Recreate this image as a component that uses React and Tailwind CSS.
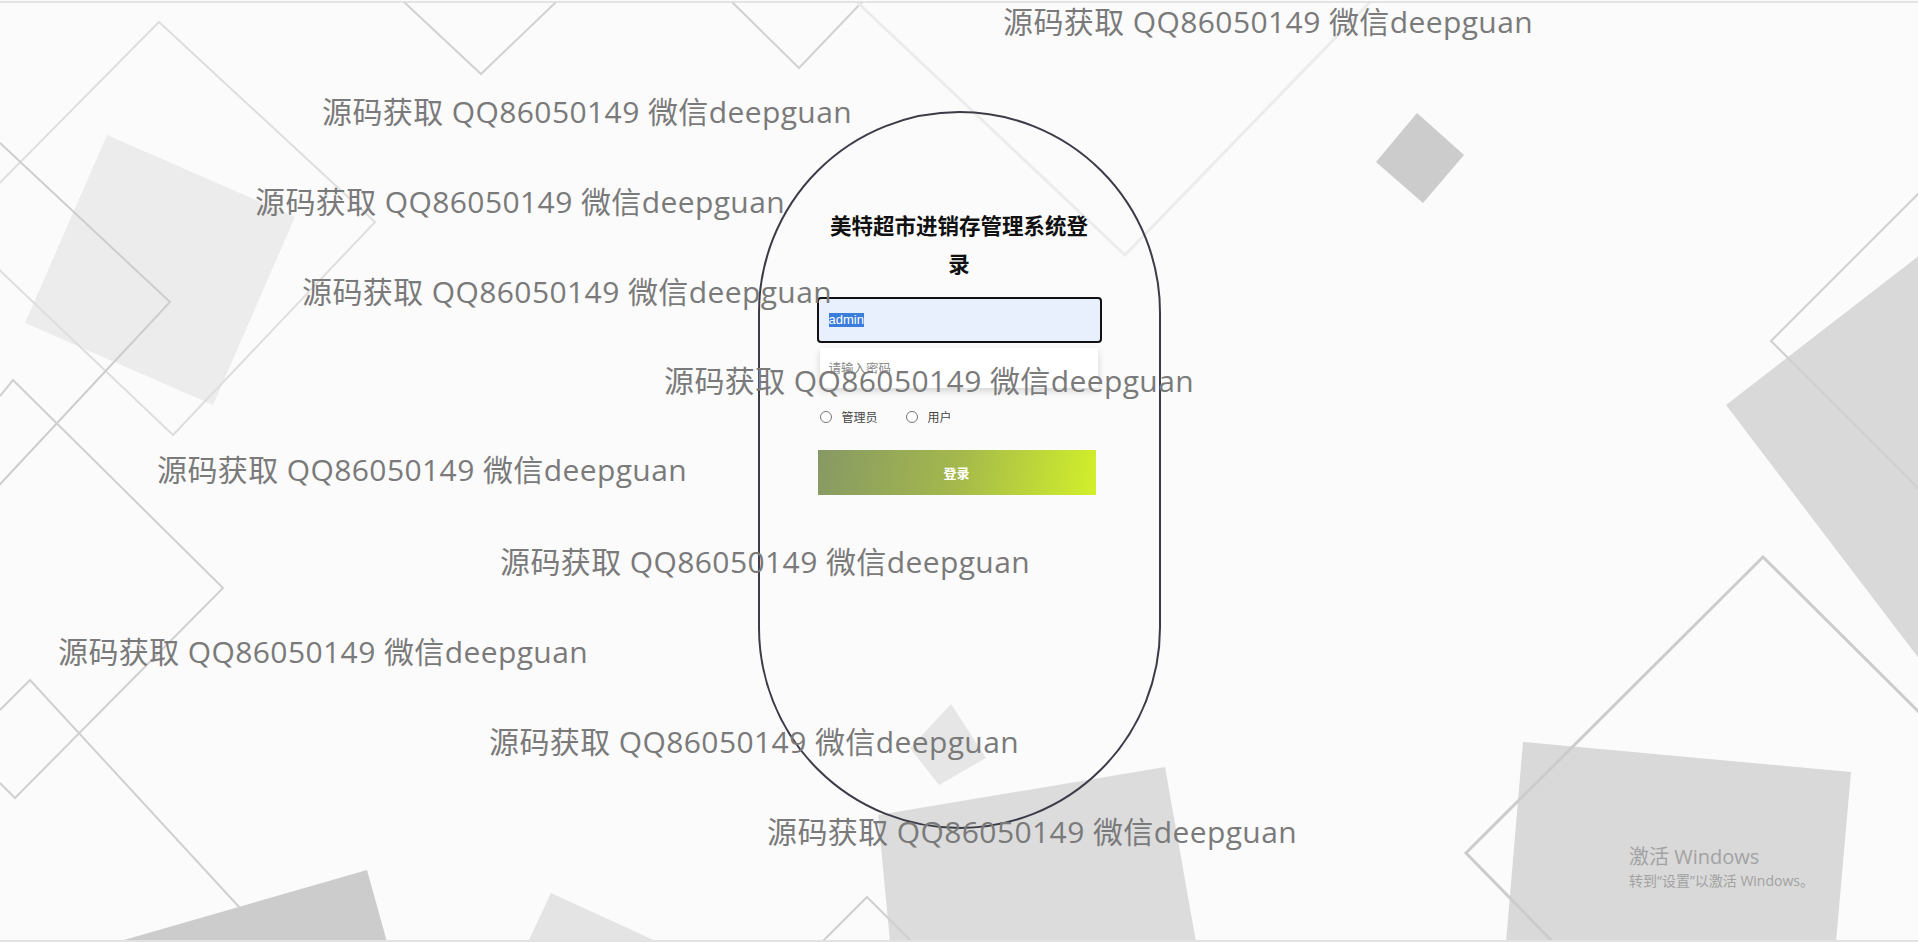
import React from 'react';

// watermark rows laid over the whole page
const WATERMARKS = [
  'left-[1003px] top-[2px]',
  'left-[322px] top-[92px]',
  'left-[255px] top-[182px]',
  'left-[302px] top-[272px]',
  'left-[664px] top-[361px]',
  'left-[157px] top-[450px]',
  'left-[500px] top-[542px]',
  'left-[58px] top-[632px]',
  'left-[489px] top-[722px]',
  'left-[767px] top-[812px]',
];

const Backdrop = () => (
  <svg className="absolute inset-0 h-full w-full" viewBox="0 0 1918 942" preserveAspectRatio="none">
    {/* filled shapes */}
    <polygon points="107,135 295,217 213,405 25,323" fill="#ececec" />
    <polygon points="117,942 367,870 387,942" fill="#cccccc" />
    <polygon points="528,942 551,893 658,942" fill="#e4e4e4" />
    <polygon points="951,704 986,758 939,785 910,748" fill="#e6e6e6" />
    <polygon points="878,815 1165,767 1196,942 890,942" fill="#dcdcdc" />
    <polygon points="1376,162 1417,113 1464,155 1423,203" fill="#cccccc" />
    <polygon points="1726,405 1920,255 1920,660" fill="#d9d9d9" />
    <polygon points="1523,742 1851,772 1836,942 1506,942" fill="#d9d9d9" />

    {/* outlines */}
    <g fill="none" strokeWidth="2">
      <polyline points="404,2 481,74 556,2" stroke="#d2d2d2" />
      <polyline points="732,2 799,68 862,2" stroke="#d2d2d2" />
      <polyline points="857,2 1125,255 1370,2" stroke="#ececec" strokeWidth="3" />
      <polygon points="159,22 375,222 173,435 -45,228" stroke="#dedede" />
      <polyline points="0,143 170,302 -10,495" stroke="#cdcdcd" />
      <polyline points="0,396 13,380 223,588 15,798 0,783" stroke="#d0d0d0" />
      <polyline points="0,710 30,680 240,908" stroke="#d0d0d0" />
      <polyline points="822,942 867,897 912,942" stroke="#d0d0d0" />
      <polyline points="1920,192 1771,341 1920,490" stroke="#d0d0d0" />
      <polyline points="1920,713 1763,557 1466,853 1553,942" stroke="#cccccc" strokeWidth="3" />
    </g>

    <line x1="0" y1="2" x2="1918" y2="2" stroke="#dcdcdc" strokeWidth="1.5" />
    <line x1="0" y1="941" x2="1918" y2="941" stroke="#e2e2e2" strokeWidth="2" />
  </svg>
);

const Radio = ({ label }) => (
  <label className="flex items-center">
    <span className="h-[12px] w-[12px] rounded-full border border-[#767676] bg-white" />
    <span className="ml-[10px] text-[12px] leading-[20px] text-[#444]">{label}</span>
  </label>
);

const LoginCard = () => (
  <div className="relative mb-[2px] flex h-[718px] w-[403px] shrink-0 flex-col items-center rounded-full border-2 border-[#3c3c48] pt-[93px]">
    <div className="flex w-[285px] flex-col">
      <h2 className="mx-auto w-[266px] text-center text-[21.5px] font-bold leading-[38px] text-[#111]">
        美特超市进销存管理系统登录
      </h2>

      <div className="mt-[15px] flex h-[46px] w-[285px] items-center rounded-[4px] border-2 border-[#111] bg-[#e8f0fe] pl-[10px] font-['Liberation_Sans','Noto_Sans_CJK_SC',sans-serif] text-[13px]">
        <span className="bg-[#3b7ddb] leading-[14px] text-white">admin</span>
      </div>

      <div className="ml-[3px] mt-[5px] flex h-[40px] w-[278px] items-center bg-white pl-[9px] text-[12.5px] text-[#8a8a8a] shadow-[0_3px_7px_rgba(0,0,0,0.16)]">
        请输入密码
      </div>

      <div className="mt-[19px] flex h-[20px] items-center gap-[28px] pl-[3px]">
        <Radio label="管理员" />
        <Radio label="用户" />
      </div>

      <button className="ml-[1px] mt-[23px] h-[45px] w-[278px] bg-[linear-gradient(100deg,#879964,#a4b84c_50%,#d2f02a)] text-[13px] font-bold text-white">
        登录
      </button>
    </div>
  </div>
);

export default function App() {
  return (
    <div className="relative flex h-[942px] w-full items-center justify-center overflow-hidden bg-[#fbfbfb] font-['Noto_Sans_CJK_SC',sans-serif]">
      <Backdrop />
      <LoginCard />

      {WATERMARKS.map((pos) => (
        <div
          key={pos}
          className={`pointer-events-none absolute whitespace-nowrap font-['Open_Sans','Noto_Sans_CJK_SC',sans-serif] text-[30px] leading-[40px] tracking-[0.4px] text-[#7a7a7a] ${pos}`}
        >
          源码获取 QQ86050149 微信deepguan
        </div>
      ))}

      <div className="pointer-events-none absolute left-[1629px] top-[843px] whitespace-nowrap font-['Open_Sans','Noto_Sans_CJK_SC',sans-serif] text-[#a2a2a2]">
        <div className="text-[20px] leading-[28px]">激活 Windows</div>
        <div className="text-[14px] leading-[20px]">转到“设置”以激活 Windows。</div>
      </div>
    </div>
  );
}
